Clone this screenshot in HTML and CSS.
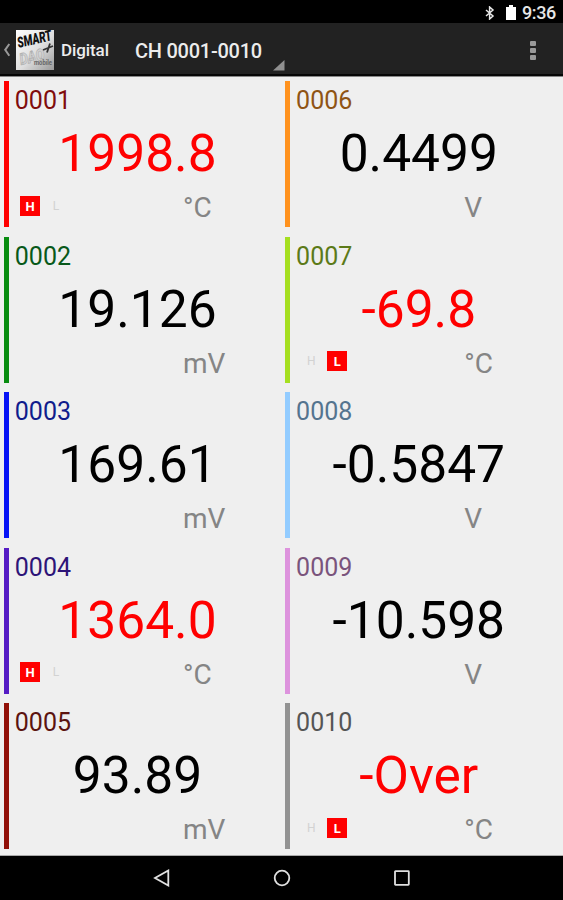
FILE: index.html
```html
<!DOCTYPE html>
<html lang="en">
<head>
<meta charset="utf-8">
<title>Digital</title>
<link rel="stylesheet" href="styles.css">
</head>
<body>
<div class="status">
  <svg class="bt" width="10" height="14" viewBox="0 0 10 14"><path d="M1 4l7 6-3.4 3V1L8 4 1 10" fill="none" stroke="#e8e8e8" stroke-width="1.5"/></svg>
  <svg class="battery" width="10" height="15" viewBox="0 0 10 15"><path d="M0 2h3V0h4v2h3v13H0z" fill="#fff"/></svg>
  <span class="clock">9:36</span>
</div>
<header class="bar">
  <svg class="back" width="8" height="16" viewBox="0 0 8 16"><path d="M6.3 2L2.2 7.8l4.1 6" fill="none" stroke="#999" stroke-width="2"/></svg>
  <svg class="logo" width="38" height="40" viewBox="0 0 38 40">
    <defs><linearGradient id="g" x1="0" y1="0" x2="1" y2="1"><stop offset="0" stop-color="#fff"/><stop offset=".55" stop-color="#dedede"/><stop offset="1" stop-color="#999"/></linearGradient></defs>
    <rect width="38" height="40" fill="url(#g)"/>
    <text class="logo-a" transform="translate(2.5 18) rotate(-13)" textLength="35" lengthAdjust="spacingAndGlyphs">SMART</text>
    <text class="logo-b" transform="translate(5 35) rotate(-13)" textLength="25" lengthAdjust="spacingAndGlyphs">DAQ</text>
    <path d="M27 20l10-4M34 13.5l-3 9" stroke="#333" stroke-width="1.8"/>
    <text class="logo-c" x="18" y="35" textLength="18" lengthAdjust="spacingAndGlyphs">mobile</text>
  </svg>
  <span class="title">Digital</span>
  <div class="spinner"><span>CH 0001-0010</span><svg width="12" height="11" viewBox="0 0 12 11"><path d="M11.5 0v10.5H0z" fill="#909090"/></svg></div>
  <div class="more"><i></i><i></i><i></i></div>
</header>
<main class="grid">
  <section class="cell c1 alarm"><h2>0001</h2><p class="value">1998.8</p><div class="foot"><b class="on">H</b><b>L</b><span>°C</span></div></section>
  <section class="cell c2"><h2>0002</h2><p class="value">19.126</p><div class="foot"><span>mV</span></div></section>
  <section class="cell c3"><h2>0003</h2><p class="value">169.61</p><div class="foot"><span>mV</span></div></section>
  <section class="cell c4 alarm"><h2>0004</h2><p class="value">1364.0</p><div class="foot"><b class="on">H</b><b>L</b><span>°C</span></div></section>
  <section class="cell c5"><h2>0005</h2><p class="value">93.89</p><div class="foot"><span>mV</span></div></section>
  <section class="cell c6"><h2>0006</h2><p class="value">0.4499</p><div class="foot"><span>V</span></div></section>
  <section class="cell c7 alarm"><h2>0007</h2><p class="value">-69.8</p><div class="foot"><b>H</b><b class="on">L</b><span>°C</span></div></section>
  <section class="cell c8"><h2>0008</h2><p class="value">-0.5847</p><div class="foot"><span>V</span></div></section>
  <section class="cell c9"><h2>0009</h2><p class="value">-10.598</p><div class="foot"><span>V</span></div></section>
  <section class="cell c10 alarm"><h2>0010</h2><p class="value">-Over</p><div class="foot"><b>H</b><b class="on">L</b><span>°C</span></div></section>
</main>
<nav class="nav">
  <svg width="18" height="18" viewBox="0 0 18 18"><path d="M15.3 1.5v15L2 9z"/></svg>
  <svg width="18" height="18" viewBox="0 0 18 18"><circle cx="9" cy="9" r="7.3"/></svg>
  <svg width="18" height="18" viewBox="0 0 18 18"><rect x="2" y="2.2" width="13.8" height="13.6" rx=".5"/></svg>
</nav>
</body>
</html>
```
FILE: styles.css
```css
* { box-sizing: border-box; }
body {
  margin: 0;
  width: 563px;
  height: 900px;
  display: flex;
  flex-direction: column;
  background: #000;
  font-family: Roboto, sans-serif;
  overflow: hidden;
}
.status {
  height: 23px;
  display: flex;
  justify-content: flex-end;
  align-items: center;
  padding: 2px 7px 0 0;
  color: #e6e6e6;
}
.bt { margin-right: 11px; }
.battery { margin-right: 6px; }
.clock { font-size: 18px; font-weight: 500; line-height: 20px; width: 34px; letter-spacing: -0.4px; }
.status .bt { margin-left: -4px; }
.bar {
  height: 53px;
  display: flex;
  align-items: center;
  background: #222;
  border-bottom: 2px solid #060606;
  padding: 0 25px 0 3px;
  color: #ececec;
}
.back { margin: 2px 5px 0 0; }
.logo { margin-top: 2px; overflow: visible; }
.logo text { font-family: Roboto, sans-serif; font-weight: 900; font-style: italic; }
.logo-a { font-size: 15px; fill: #111; }
.logo-b { font-size: 16px; fill: #d2d2d2; stroke: #aaa; stroke-width: .6px; }
.logo .logo-c { font-size: 6.5px; fill: #666; font-style: normal; font-weight: 700; }
.title { font-size: 17px; font-weight: 500; width: 49px; margin: 3px 0 0 7px; letter-spacing: -0.1px; }
.spinner { display: flex; width: 150px; height: 100%; margin-left: 25px; align-items: center; font-size: 20px; font-weight: 500; letter-spacing: -0.25px; }
.spinner span { width: 128px; margin: 4px 10px 0 0; white-space: nowrap; }
.spinner svg { align-self: flex-end; margin-bottom: 3px; }
.more { margin: 4px 0 0 auto; width: 10px; display: flex; flex-direction: column; gap: 2px; align-items: center; }
.more i { width: 6px; height: 5px; background: #999; border-radius: 1px; }
.grid {
  height: 780px;
  display: grid;
  grid-template: repeat(5, 155.6px) / 281.3px 281.7px;
  grid-auto-flow: column;
  background: #efefef;
  border-top: 1px solid #888;
  border-bottom: 1px solid #aaa;
}
.cell {
  margin: 4px 0 5.6px 4px;
  border-left: 5px solid var(--c);
  height: 146px;
}
h2 { margin: 0; padding: 4px 0 0 5.8px; font-size: 25px; line-height: 32px; font-weight: 400; color: var(--t); }
.value { margin: 6px 0 0; width: 257px; text-align: center; font-size: 51.5px; line-height: 62px; color: #000; }
.alarm .value { color: #f00; }
.foot { display: flex; align-items: center; height: 32px; margin-top: 7px; padding-left: 11px; width: 258px; }
.foot span { margin-left: auto; width: 84px; font-size: 28px; line-height: 32px; color: #858585; font-weight: 400; }
.foot b { width: 20px; height: 20px; margin: 0 6px 5px 0; font-size: 12px; line-height: 21px; text-align: center; font-weight: 400; color: #d2d2d2; }
.foot .on { background: #f00; color: #fff; font-weight: 700; font-size: 13px; }
.c1 { --c: #f00; --t: #800c0c; }
.c2 { --c: #088c10; --t: #08591a; }
.c3 { --c: #0612f5; --t: #101c8c; }
.c4 { --c: #551bc4; --t: #2d1478; }
.c5 { --c: #911008; --t: #5c1410; }
.c6 { --c: #ff921e; --t: #8f5414; }
.c7 { --c: #a5df20; --t: #5c7a18; }
.c8 { --c: #93ccff; --t: #54748f; }
.c9 { --c: #dd93dd; --t: #7a547c; }
.c10 { --c: #929292; --t: #555; }
.nav { flex: 1; display: flex; justify-content: center; align-items: center; gap: 102px; }
.nav svg { fill: none; stroke: #e0e0e0; stroke-width: 1.8; }
```
